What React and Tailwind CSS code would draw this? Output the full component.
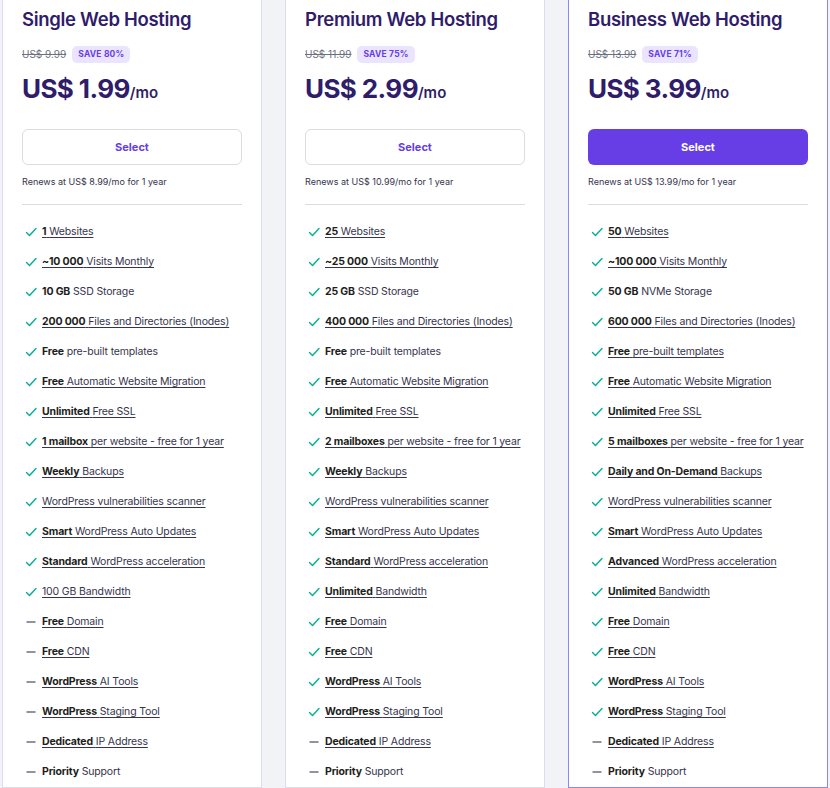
import React from 'react';

const f = (on, b, t, u = true) => ({ on, b, t, u });

const plans = [
  {
    name: 'Single Web Hosting',
    old: 'US$ 9.99',
    save: 'SAVE 80%',
    price: 'US$ 1.99',
    renew: 'Renews at US$ 8.99/mo for 1 year',
    primary: false,
    features: [
      f(true, '1', 'Websites'),
      f(true, '~10 000', 'Visits Monthly'),
      f(true, '10 GB', 'SSD Storage', false),
      f(true, '200 000', 'Files and Directories (Inodes)'),
      f(true, 'Free', 'pre-built templates', false),
      f(true, 'Free', 'Automatic Website Migration'),
      f(true, 'Unlimited', 'Free SSL'),
      f(true, '1 mailbox', 'per website - free for 1 year'),
      f(true, 'Weekly', 'Backups'),
      f(true, '', 'WordPress vulnerabilities scanner'),
      f(true, 'Smart', 'WordPress Auto Updates'),
      f(true, 'Standard', 'WordPress acceleration'),
      f(true, '', '100 GB Bandwidth'),
      f(false, 'Free', 'Domain'),
      f(false, 'Free', 'CDN'),
      f(false, 'WordPress', 'AI Tools'),
      f(false, 'WordPress', 'Staging Tool'),
      f(false, 'Dedicated', 'IP Address'),
      f(false, 'Priority', 'Support', false),
    ],
  },
  {
    name: 'Premium Web Hosting',
    old: 'US$ 11.99',
    save: 'SAVE 75%',
    price: 'US$ 2.99',
    renew: 'Renews at US$ 10.99/mo for 1 year',
    primary: false,
    features: [
      f(true, '25', 'Websites'),
      f(true, '~25 000', 'Visits Monthly'),
      f(true, '25 GB', 'SSD Storage', false),
      f(true, '400 000', 'Files and Directories (Inodes)'),
      f(true, 'Free', 'pre-built templates', false),
      f(true, 'Free', 'Automatic Website Migration'),
      f(true, 'Unlimited', 'Free SSL'),
      f(true, '2 mailboxes', 'per website - free for 1 year'),
      f(true, 'Weekly', 'Backups'),
      f(true, '', 'WordPress vulnerabilities scanner'),
      f(true, 'Smart', 'WordPress Auto Updates'),
      f(true, 'Standard', 'WordPress acceleration'),
      f(true, 'Unlimited', 'Bandwidth'),
      f(true, 'Free', 'Domain'),
      f(true, 'Free', 'CDN'),
      f(true, 'WordPress', 'AI Tools'),
      f(true, 'WordPress', 'Staging Tool'),
      f(false, 'Dedicated', 'IP Address'),
      f(false, 'Priority', 'Support', false),
    ],
  },
  {
    name: 'Business Web Hosting',
    old: 'US$ 13.99',
    save: 'SAVE 71%',
    price: 'US$ 3.99',
    renew: 'Renews at US$ 13.99/mo for 1 year',
    primary: true,
    features: [
      f(true, '50', 'Websites'),
      f(true, '~100 000', 'Visits Monthly'),
      f(true, '50 GB', 'NVMe Storage', false),
      f(true, '600 000', 'Files and Directories (Inodes)'),
      f(true, 'Free', 'pre-built templates'),
      f(true, 'Free', 'Automatic Website Migration'),
      f(true, 'Unlimited', 'Free SSL'),
      f(true, '5 mailboxes', 'per website - free for 1 year'),
      f(true, 'Daily and On-Demand', 'Backups'),
      f(true, '', 'WordPress vulnerabilities scanner'),
      f(true, 'Smart', 'WordPress Auto Updates'),
      f(true, 'Advanced', 'WordPress acceleration'),
      f(true, 'Unlimited', 'Bandwidth'),
      f(true, 'Free', 'Domain'),
      f(true, 'Free', 'CDN'),
      f(true, 'WordPress', 'AI Tools'),
      f(true, 'WordPress', 'Staging Tool'),
      f(false, 'Dedicated', 'IP Address'),
      f(false, 'Priority', 'Support', false),
    ],
  },
];

const Check = () => (
  <svg width="12" height="12" viewBox="0 0 12 12" fill="none" className="shrink-0">
    <path d="M1.5 6.5L4.5 9.5L11 2.5" stroke="#00b090" strokeWidth="1.4" strokeLinecap="round" strokeLinejoin="round" />
  </svg>
);

const Dash = () => (
  <svg width="12" height="12" viewBox="0 0 12 12" fill="none" className="shrink-0">
    <path d="M1.5 6H10.5" stroke="#6d7081" strokeWidth="1.5" />
  </svg>
);

const PlanCard = ({ plan }) => (
  <div
    className={`w-[260px] shrink-0 bg-white border-x border-b px-[19px] pt-[7px] ${
      plan.primary ? 'border-[#8c85ff]' : 'border-[#dadcf6]'
    }`}
  >
    <h2 className="text-[18.5px] leading-[24px] font-semibold text-[#2f1c6a] tracking-[-0.3px]">{plan.name}</h2>

    <div className="flex items-center gap-[6px] mt-[15px] h-[17px]">
      <span className="text-[10px] text-[#6d7081] line-through">{plan.old}</span>
      <span className="h-[17px] px-[6px] flex items-center rounded-[5px] bg-[#ebe4ff] text-[8.5px] font-bold text-[#673de6] tracking-[0.2px]">
        {plan.save}
      </span>
    </div>

    <div className="flex items-baseline mt-[10px] text-[#2f1c6a]">
      <span className="text-[26px] leading-[32px] font-bold tracking-[-0.6px]">{plan.price}</span>
      <span className="text-[15px] font-semibold">/mo</span>
    </div>

    <button
      type="button"
      className={`mt-[24px] w-full h-[36px] rounded-[6px] text-[11px] font-bold ${
        plan.primary
          ? 'bg-[#673de6] text-white'
          : 'bg-white border border-[#dadce0] text-[#673de6]'
      }`}
    >
      Select
    </button>

    <p className="mt-[11px] text-[9px] leading-[12px] text-[#36344d]">{plan.renew}</p>

    <div className="mt-[16px] border-t border-[#dadce0]" />

    <ul className="mt-[12px]">
      {plan.features.map((it, i) => (
        <li
          key={i}
          className="flex items-center gap-[5px] h-[30px] pl-[3px] text-[10.5px] tracking-[-0.15px] whitespace-nowrap text-[#36344d]"
        >
          {it.on ? <Check /> : <Dash />}
          <span className={it.u ? 'underline underline-offset-[2px] decoration-[#36344d]' : ''}>
            {it.b && <span className="font-bold text-[#1d1e20]">{it.b}</span>}
            {it.b ? ' ' : ''}
            {it.t}
          </span>
        </li>
      ))}
    </ul>
  </div>
);

export default function App() {
  return (
    <div
      className="w-[830px] h-[788px] overflow-hidden bg-[#f2f3f7] flex gap-[23px] pl-[2px]"
      style={{ fontFamily: 'Inter, "Liberation Sans", sans-serif' }}
    >
      {plans.map((p) => (
        <PlanCard key={p.name} plan={p} />
      ))}
    </div>
  );
}
